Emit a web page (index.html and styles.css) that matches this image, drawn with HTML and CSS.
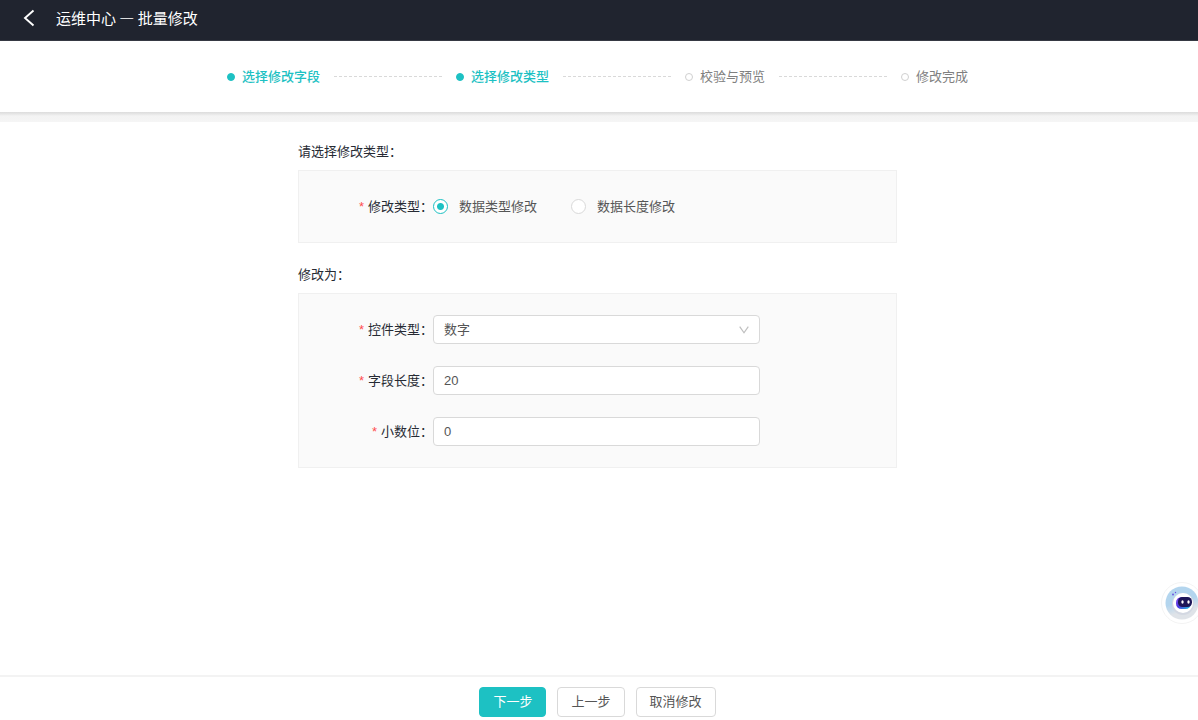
FILE: index.html
```html
<!DOCTYPE html>
<html lang="zh-CN">
<head>
<meta charset="utf-8">
<title>运维中心 — 批量修改</title>
<link rel="stylesheet" href="styles.css">
</head>
<body>
<header class="header">
  <button class="back" type="button" aria-label="返回">
    <svg width="12" height="18" viewBox="0 0 12 18" fill="none" stroke="#fff" stroke-width="1.9"><path d="M10.500 1.500L2 9l8.500 7.500"/></svg>
  </button>
  <h1 class="title">运维中心 — 批量修改</h1>
</header>

<ol class="steps">
  <li class="step active">选择修改字段</li>
  <li class="step active">选择修改类型</li>
  <li class="step">校验与预览</li>
  <li class="step">修改完成</li>
</ol>

<main class="content">
  <form class="form" id="modify-form">
    <h2 class="section-title">请选择修改类型：</h2>
    <div class="panel">
      <div class="row" role="radiogroup" aria-labelledby="type-label">
        <span class="label" id="type-label">修改类型：</span>
        <div class="radios">
          <label class="radio"><input type="radio" name="type" checked>数据类型修改</label>
          <label class="radio"><input type="radio" name="type">数据长度修改</label>
        </div>
      </div>
    </div>

    <h2 class="section-title">修改为：</h2>
    <div class="panel">
      <div class="row">
        <label class="label" for="control">控件类型：</label>
        <div class="select-wrap">
          <select class="field" id="control">
            <option>数字</option>
          </select>
          <svg class="arrow" width="10" height="8" viewBox="0 0 10 8" fill="none" stroke="#bfbfbf" stroke-width="1.2"><path d="M0.700 0.700L5 6.800L9.300 0.700"/></svg>
        </div>
      </div>
      <div class="row">
        <label class="label" for="length">字段长度：</label>
        <input class="field" id="length" type="text" value="20">
      </div>
      <div class="row">
        <label class="label" for="decimal">小数位：</label>
        <input class="field" id="decimal" type="text" value="0">
      </div>
    </div>
  </form>
</main>

<footer class="footer">
  <button class="btn primary" type="submit" form="modify-form">下一步</button>
  <button class="btn" type="button">上一步</button>
  <button class="btn" type="button">取消修改</button>
</footer>

<button class="robot" type="button" aria-label="智能助手">
  <svg width="42" height="42" viewBox="0 0 42 42">
    <defs>
      <linearGradient id="face" x1="0" y1="0" x2="1" y2="1">
        <stop offset="0" stop-color="#8a4df0"/>
        <stop offset="0.5" stop-color="#4b3ae0"/>
        <stop offset="1" stop-color="#1fd6dc"/>
      </linearGradient>
      <linearGradient id="disc" x1="0" y1="0" x2="0.300" y2="1">
        <stop offset="0.550" stop-color="#b3d5ee"/>
        <stop offset="0.850" stop-color="#dfe3e8"/>
      </linearGradient>
    </defs>
    <circle cx="21" cy="21" r="20.500" fill="#fff" stroke="#f3f3f3"/>
    <circle cx="21" cy="21" r="16.500" fill="url(#disc)"/>
    <circle cx="22" cy="22" r="11" fill="#d3d8e2"/>
    <circle cx="22" cy="21" r="10" fill="#fff"/>
    <circle cx="12" cy="12.500" r="0.900" fill="#6a4de0"/>
    <circle cx="14.500" cy="10.500" r="0.700" fill="#6a4de0"/>
    <rect x="15" y="15" width="15" height="12" rx="5.500" fill="url(#face)"/>
    <rect x="17" y="15" width="14" height="10" rx="4.500" fill="#1d1658"/>
    <ellipse cx="21.500" cy="20" rx="1.200" ry="1.800" fill="#fff"/>
    <ellipse cx="27.500" cy="20" rx="1.200" ry="1.800" fill="#fff"/>
  </svg>
</button>
</body>
</html>
```

FILE: styles.css
```css
*,
*::before,
*::after {
  box-sizing: border-box;
}

body {
  margin: 0;
  min-height: 100vh;
  display: flex;
  flex-direction: column;
  overflow-x: hidden;
  background: #fff;
  color: #262a33;
  font: 13px/20px "Liberation Sans", "Noto Sans CJK SC", sans-serif;
}

button,
input,
select {
  font: inherit;
  color: inherit;
}

.header {
  display: flex;
  align-items: center;
  gap: 16px;
  height: 41px;
  padding: 0 18px 4px;
  background: #20242f;
  border-bottom: 1px solid #363943;
  color: #fff;
}

.back {
  display: flex;
  justify-content: center;
  width: 22px;
  padding: 0;
  border: 0;
  background: none;
  cursor: pointer;
}

.title {
  margin: 0;
  font-family: "Noto Sans CJK SC", sans-serif;
  font-size: 15px;
  font-weight: 400;
}

.steps {
  display: flex;
  justify-content: center;
  align-items: center;
  height: 81px;
  margin: 0;
  padding: 0 3px 10px 0;
  list-style: none;
  background: linear-gradient(#fff 71px, #dcdcdc 71px, #e6e6e6 73px, #f3f3f3 75px, #f5f5f5);
  color: #808080;
}

.step {
  display: flex;
  align-items: center;
}

.step::before {
  content: "";
  width: 8px;
  height: 8px;
  margin-right: 7px;
  border: 1px solid #d0d0d0;
  border-radius: 50%;
}

.step:not(:last-child)::after {
  content: "";
  width: 108px;
  height: 1px;
  margin: 0 14px;
  background: repeating-linear-gradient(90deg, #d9d9d9 0 3px, transparent 3px 5px);
}

.step.active {
  color: #1dc1c3;
  font-weight: 500;
}

.step.active::before {
  border-color: #1dc1c3;
  background: #1dc1c3;
}

.content {
  flex: 1;
  padding: 20px 3px 20px 0;
}

.form {
  width: 50vw;
  min-width: 500px;
  margin: 0 auto;
}

.section-title {
  margin: 0 0 8px;
  font-size: 13px;
  font-weight: 400;
}

.panel {
  display: flex;
  flex-direction: column;
  gap: 22px;
  margin-bottom: 22px;
  padding: 21px 136px 21px 0;
  border: 1px solid #f0f0f0;
  background: #fafafa;
}

.row {
  display: flex;
  align-items: center;
  height: 29px;
}

.label {
  flex: 0 0 134px;
  text-align: right;
}

.label::before {
  content: "*";
  margin-right: 4px;
  color: #ff4d4f;
}

.radios {
  display: flex;
  gap: 34px;
  color: #555;
}

.radio {
  display: flex;
  align-items: center;
  gap: 11px;
}

.radio input {
  appearance: none;
  width: 15px;
  height: 15px;
  margin: 0;
  border: 1px solid #d9d9d9;
  border-radius: 50%;
  background: #fff;
}

.radio input:checked {
  border-color: #1dc1c3;
  background: radial-gradient(circle, #1dc1c3 3px, #fff 4px);
}

.select-wrap {
  position: relative;
  flex: 1;
}

.field {
  display: block;
  flex: 1;
  width: 100%;
  min-width: 0;
  height: 29px;
  padding: 0 10px;
  border: 1px solid #d9d9d9;
  border-radius: 4px;
  appearance: none;
  background: #fff;
  color: #555;
}

.arrow {
  position: absolute;
  top: 11px;
  right: 11px;
  pointer-events: none;
}

.footer {
  display: flex;
  justify-content: center;
  gap: 11px;
  height: 45px;
  padding: 10px 3px 0 0;
  border-top: 2px solid #f3f3f3;
}

.btn {
  height: 30px;
  padding: 0 13px;
  border: 1px solid #d9d9d9;
  border-radius: 4px;
  background: #fff;
  color: #555;
  cursor: pointer;
}

.btn.primary {
  border-color: #1dc1c3;
  background: #1dc1c3;
  color: #fff;
}

/* assistant entry, partly off the right edge */
.robot {
  position: fixed;
  right: -5px;
  bottom: 96px;
  width: 42px;
  height: 42px;
  padding: 0;
  border: 0;
  background: none;
  cursor: pointer;
}
```
